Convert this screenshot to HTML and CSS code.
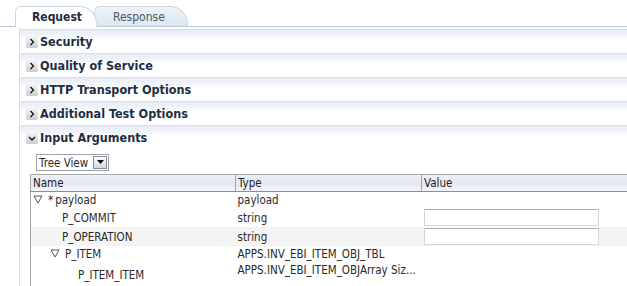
FILE: index.html
```html
<!DOCTYPE html>
<html>
<head>
<link rel="stylesheet" href="styles.css">
</head>
<body>

<div class="tabs">
  <div class="tab active">Request</div>
  <div class="tab">Response</div>
</div>

<div class="panel">
  <div class="sec-head">
    <span class="disc"><svg width="12" height="12" viewBox="0 0 12 12"><path d="M4.5 3 L7.5 6 L4.5 9" fill="none" stroke="#111" stroke-width="1.3"/></svg></span>Security
  </div>
  <div class="sec-head">
    <span class="disc"><svg width="12" height="12" viewBox="0 0 12 12"><path d="M4.5 3 L7.5 6 L4.5 9" fill="none" stroke="#111" stroke-width="1.3"/></svg></span>Quality of Service
  </div>
  <div class="sec-head">
    <span class="disc"><svg width="12" height="12" viewBox="0 0 12 12"><path d="M4.5 3 L7.5 6 L4.5 9" fill="none" stroke="#111" stroke-width="1.3"/></svg></span>HTTP Transport Options
  </div>
  <div class="sec-head">
    <span class="disc"><svg width="12" height="12" viewBox="0 0 12 12"><path d="M4.5 3 L7.5 6 L4.5 9" fill="none" stroke="#111" stroke-width="1.3"/></svg></span>Additional Test Options
  </div>
  <div class="sec-head">
    <span class="disc"><svg width="12" height="12" viewBox="0 0 12 12"><path d="M3 5 L6 8 L9 5" fill="none" stroke="#111" stroke-width="1.3"/></svg></span>Input Arguments
  </div>

  <div class="sec-body">
    <div class="viewsel">
      <span class="viewsel-text">Tree View</span>
      <span class="drop"><svg width="9" height="5" viewBox="0 0 9 5"><path d="M1 0 L8 0 L4.5 4 Z" fill="#111"/></svg></span>
    </div>

    <table class="args">
      <tr class="head">
        <th class="c-name">Name</th>
        <th class="c-type">Type</th>
        <th class="c-value">Value</th>
      </tr>
      <tr class="r-short">
        <td><span class="tw"><svg width="10" height="9" viewBox="0 0 10 9"><path d="M1 1 L9 1 L5 8 Z" fill="none" stroke="#555" stroke-width="1"/></svg></span><span class="req">*</span>payload</td>
        <td>payload</td>
        <td></td>
      </tr>
      <tr class="r-input">
        <td class="lvl1">P_COMMIT</td>
        <td>string</td>
        <td class="vcell"><input type="text" class="val"></td>
      </tr>
      <tr class="r-input alt">
        <td class="lvl1">P_OPERATION</td>
        <td>string</td>
        <td class="vcell"><input type="text" class="val"></td>
      </tr>
      <tr class="r-short">
        <td class="lvl1b"><span class="tw"><svg width="10" height="9" viewBox="0 0 10 9"><path d="M1 1 L9 1 L5 8 Z" fill="none" stroke="#555" stroke-width="1"/></svg></span>P_ITEM</td>
        <td>APPS.INV_EBI_ITEM_OBJ_TBL</td>
        <td></td>
      </tr>
      <tr class="r-tall">
        <td class="lvl2">P_ITEM_ITEM</td>
        <td class="top">APPS.INV_EBI_ITEM_OBJArray Siz...</td>
        <td></td>
      </tr>
    </table>
  </div>
</div>

</body>
</html>
```

FILE: styles.css
```css
body {
  margin: 0;
  font-family: "DejaVu Sans Condensed", "DejaVu Sans", sans-serif;
  font-size: 11px;
  color: #2b2b2b;
  background: #fff;
  overflow: hidden;
}

/* tab strip */
.tabs {
  display: flex;
  padding: 6px 0 0 15px;
  border-bottom: 1px solid #b9c8d6;
  height: 20px;
}

.tab {
  height: 20px;
  line-height: 20px;
  font-size: 12px;
  box-sizing: border-box;
  border: 1px solid #cbd8e4;
  border-bottom: none;
  border-radius: 6px 18px 0 0;
}

.tab.active {
  width: 82px;
  padding-left: 16px;
  font-weight: bold;
  color: #1d2d44;
  background: #fff;
  height: 21px;
  position: relative;
  z-index: 2;
}

.tab:not(.active) {
  width: 94px;
  margin-left: -3px;
  padding-left: 18px;
  color: #4d5966;
  background: linear-gradient(#eef3f8, #dce7f0);
}

/* accordion */
.panel {
  margin-left: 19px;
  padding-top: 2px;
  border-left: 1px solid #d6dee8;
}

.sec-head {
  display: flex;
  align-items: center;
  height: 23px;
  border-top: 1px solid #d5deea;
  border-top-left-radius: 3px;
  background: linear-gradient(#e4ebf6, #f4f6fb 7px, #fff 9px);
  font-size: 12.5px;
  font-weight: bold;
  color: #1d2d44;
}

.disc {
  display: inline-flex;
  width: 12px;
  height: 12px;
  margin: 1px 2px 0 6px;
  border-radius: 2px;
  background: linear-gradient(#f6f6f6, #c9ccd0);
}

.sec-body {
  padding-top: 5px;
}

.viewsel {
  display: flex;
  align-items: center;
  width: 69px;
  height: 15px;
  margin-left: 16px;
  border: 1px solid #9da3aa;
  padding-left: 2px;
  font-size: 11.5px;
}

.viewsel-text {
  flex: 1;
}

.drop {
  display: inline-flex;
  align-items: center;
  justify-content: center;
  width: 14px;
  height: 13px;
  box-sizing: border-box;
  border: 1px solid #8a8f96;
  background: linear-gradient(#fafafa, #d6d8dc);
  margin-right: 1px;
}

/* arguments table */
.args {
  margin: 3px 0 0 10px;
  border-collapse: collapse;
  border-left: 1px solid #a3a3a3;
  width: 597px;
  table-layout: fixed;
  font-size: 11.5px;
}

.args th {
  height: 16px;
  padding: 0 0 0 2px;
  text-align: left;
  font-weight: normal;
  color: #1f1f1f;
  border-top: 1px solid #a9a9a9;
  border-bottom: 1px solid #8e8e8e;
  background: linear-gradient(#eceef6, #e6e8f2 50%, #f5f6fb);
}

.args th + th {
  border-left: 1px solid #a3a3a3;
}

.c-name { width: 202px; }
.c-type { width: 183px; }

.args td {
  padding: 0 0 0 2px;
  white-space: nowrap;
  overflow: hidden;
}

.r-short td { height: 16px; }
.r-input td { height: 19px; }
.r-tall td { height: 24px; }

.alt td { background: #f4f4f4; }

.tw {
  display: inline-block;
  width: 10px;
  margin-right: 5px;
}

.req {
  margin-right: 2px;
}

.lvl1 { padding-left: 31px !important; }
.lvl1b { padding-left: 19px !important; }
.lvl2 { padding-left: 47px !important; }

.args td.top {
  vertical-align: top;
  padding-top: 1px;
}

.args td.vcell {
  padding-left: 0;
}

.val {
  display: block;
  margin: 0 0 0 2px;
  width: 175px;
  height: 17px;
  box-sizing: border-box;
  border: 1px solid #d2d6da;
  border-top-color: #a9b1b9;
  background: #fff;
  padding: 0;
}
```
